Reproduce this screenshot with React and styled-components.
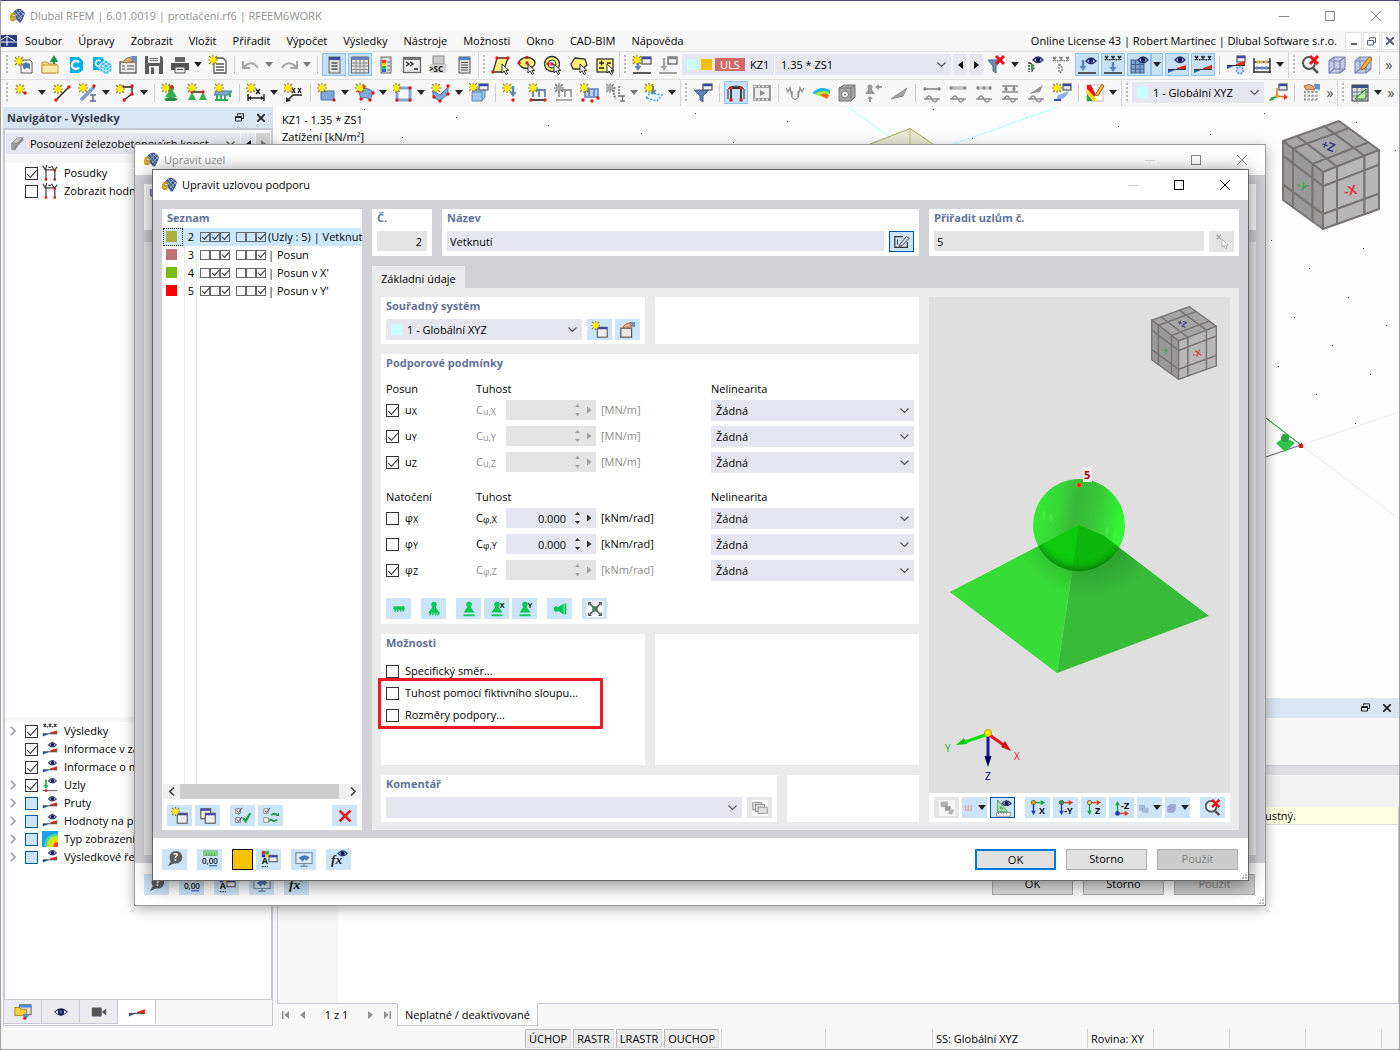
import React from "react";
import styled, { createGlobalStyle, css } from "styled-components";

const c = {
  field: "#e6e6f1",
  off: "#e4e4e4",
  tool: "#cce4f7",
  panel: "#ebebeb",
  body: "#d1d1d6",
  chrome: "#f7f7f7",
  head: "#d8e5f2",
  title: "#5f7296",
  line: "#c8c8d4",
};

const Global = createGlobalStyle`
  * { box-sizing: border-box; }
  body { margin: 0; overflow: hidden; font: 11px/18px "Open Sans", "Noto Sans", sans-serif; color: #000; }
  button, input, select { font: inherit; color: inherit; border: 0; padding: 0; margin: 0; background: none; border-radius: 0; outline: 0; }
  svg { display: block; flex: none; }
`;

/* ---------- icon primitives ---------- */
const Star = ({ x = 5, y = 5, k = "#ffee00", s = "#9a7b00" }) => (
  <g>
    <path d={`M${x - 5} ${y}H${x + 5}M${x} ${y - 5}V${y + 5}M${x - 4} ${y - 4}L${x + 4} ${y + 4}M${x + 4} ${y - 4}L${x - 4} ${y + 4}`} stroke={s} strokeWidth="1.2" />
    <circle cx={x} cy={y} r="2.8" fill={k} stroke={k} />
  </g>
);
const GStar = (p) => <Star {...p} k="#aaa" s="#777" />;
const Eye = ({ x = 13, y = 5 }) => (
  <g>
    <path d={`M${x - 5} ${y}Q${x} ${y - 6} ${x + 5} ${y}Q${x} ${y + 5} ${x - 5} ${y}Z`} fill="#c3c9ea" stroke="#2a3266" strokeWidth="1.3" />
    <circle cx={x} cy={y - 0.3} r="2.3" fill="#111a55" />
  </g>
);
const Win = ({ x = 9, y = 2, w = 9, h = 7, k = "#3b46a8" }) => (
  <g>
    <rect x={x} y={y} width={w} height={h} fill="#eee" stroke="#555" strokeWidth="1.2" />
    <rect x={x} y={y} width={w} height="2.2" fill={k} />
  </g>
);
const Dots = ({ p, k = "#e8141c" }) => p.map(([x, y], i) => <circle key={i} cx={x} cy={y} r="1.7" fill={k} />);
const XXX = ({ y = 2, k = "#222" }) => (
  <path d={`M2 ${y}l3 4m0-4l-3 4M8.500 ${y}l3 4m0-4l-3 4M15 ${y}l3 4m0-4l-3 4M6.700 ${y + 3}v1.500M13.200 ${y + 3}v1.500`} stroke={k} strokeWidth="1.500" fill="none" />
);
const Wedge = ({ y = 12 }) => (
  <g>
    <path d={`M1 ${y + 1.500}H10V${y + 1}L1 ${y + 5}Z`} fill="#2f52b5" />
    <path d={`M10 ${y + 1.500}H19V${y - 3}L10 ${y}Z`} fill="#d9301c" />
    <path d={`M1 ${y + 1.500}H19`} stroke="#333" />
  </g>
);
const Down = ({ x = 6, y = 3, h = 10, k = "#5b84bd" }) => (
  <g>
    <path d={`M${x} ${y}V${y + h - 3}`} stroke={k} strokeWidth="2.400" />
    <path d={`M${x - 3.500} ${y + h - 4}H${x + 3.500}L${x} ${y + h + 1}Z`} fill={k} />
  </g>
);
const Wave = () => <path d="M2 16H18M4 16q3-6 6 0t6 0" stroke="#8c8c8c" strokeWidth="1.500" fill="none" />;
const Cursor = ({ x = 11, y = 9, k = "#fff" }) => (
  <path d={`M${x} ${y}v9l2.200-2 1.800 3.500 1.600-.8-1.700-3.300h3Z`} fill={k} stroke="#333" strokeWidth="1" />
);
const RedX = ({ x = 10, y = 2, s = 8 }) => <path d={`M${x} ${y}l${s} ${s}m0-${s}l-${s} ${s}`} stroke="#f0101a" strokeWidth="3" />;
const Support = ({ k = "#2fb14d" }) => (
  <g fill={k}>
    <circle cx="10" cy="5" r="3" />
    <path d="M8.500 6H11.500L12.500 9L16 14H4L7.500 9Z" />
  </g>
);
const Hatch = ({ y = 15, k = "#00c853" }) => (
  <path d={`M4 ${y}H16M5 ${y + 3}l2-3M8 ${y + 3}l2-3M11 ${y + 3}l2-3M14 ${y + 3}l2-3`} stroke={k} strokeWidth="1.400" fill="none" />
);
const Letter = ({ x, y, children, k = "#111", s = 8 }) => (
  <text x={x} y={y} fontSize={s} fontWeight="700" fill={k}>{children}</text>
);
const Box3 = ({ k = "#8fb2df", e = "#5d6f9c" }) => (
  <g fill={k} stroke={e} strokeWidth="1.100" strokeLinejoin="round">
    <path d="M2 6L7 2H18V14L13 18H2Z" />
    <path d="M2 6H13V18M13 6L18 2M7 2V14H18M7 14L2 18" fill="none" />
  </g>
);
const Sheet = ({ k = "#5d7fc0" }) => (
  <g>
    <rect x="5" y="2" width="11" height="16" fill="#ddd" stroke="#555" />
    <rect x="5" y="2" width="11" height="3" fill={k} />
    <path d="M7 7.500H14M7 10H14M7 12.500H14M7 15H14" stroke="#555" />
  </g>
);
const Axes = ({ a, b, o, t }) => (
  <g strokeWidth="1.600" fill="none">
    <path d="M5 4H13" stroke={a} />
    <path d="M13 1L18 4L13 7Z" fill={a} stroke="none" />
    <path d="M5 4V14" stroke={b} />
    <path d="M2.500 13H7.500L5 18Z" fill={b} stroke="none" />
    <circle cx="5" cy="4" r="2.400" fill={o} stroke="#555" strokeWidth="1" />
    <text x={t.length > 1 ? 8 : 11} y="17" fontSize="10" fontWeight="700" fill="#111">{t}</text>
  </g>
);
const Gear = ({ x, y }) => <circle cx={x} cy={y} r="3.500" fill="#cfe0fa" stroke="#6f95d8" strokeWidth="2" strokeDasharray="2 1" />;

const icons = {
  newdoc: <><path d="M7 5H16L18 7V18H7Z" fill="#fff" stroke="#555" /><path d="M8 9q4-3 8 0v6q-3-4-6 0Z" fill="#4d78b0" /><Star x={5} y={6} /></>,
  open: <><path d="M2 7H7L9 9H16V18H2Z" fill="#f4d980" stroke="#b8973a" /><path d="M2 18V10H18V18Z" fill="#fbe9a6" stroke="#b8973a" /><path d="M14 9V4M11.500 6L14 2L16.500 6Z" stroke="#1b9148" strokeWidth="2" fill="#1b9148" /></>,
  cloudC: <><path d="M4 2H13L17 6V15L13 18H4Z" fill="#00b1e6" /><path d="M13 7.500A4 4 0 1 0 13 12.500" stroke="#fff" strokeWidth="2.300" fill="none" /></>,
  cubes: <><path d="M1 2H10L12 5V15H1Z" fill="#00b1e6" /><path d="M8.500 6A3 3 0 1 0 8 11" stroke="#fff" strokeWidth="1.600" fill="none" /><path d="M8 9L14 5L20 9V16L14 20L8 16Z" fill="#35b9e8" stroke="#fff" /><path d="M8 9L14 13L20 9M14 13V20M11 7L17 11V18M17 7L11 11V18M8 12.500L14 16.500L20 12.500" stroke="#fff" fill="none" strokeWidth=".8" /></>,
  hand: <><rect x="2" y="7" width="16" height="11" fill="#e8e8e8" stroke="#555" strokeWidth="1.300" /><path d="M4 11H7M9 11H16M4 14H7M9 14H16" stroke="#555" /><path d="M5 7q3-5 8-5l2 5q-4-1-6 1Z" fill="#e2ab7c" stroke="#a36a3c" /><path d="M13 1L19 1V8L15 7Z" fill="#6c8fc2" /></>,
  save: <><path d="M1 1H17L19 3V19H1Z" fill="#5b5b5b" /><rect x="4" y="1" width="12" height="7" fill="#eee" /><path d="M5.500 3.500H14M5.500 5.500H14" stroke="#777" /><rect x="5" y="11" width="10" height="8" fill="#eee" /><rect x="7" y="12.500" width="3" height="6.500" fill="#5b5b5b" /></>,
  print: <><rect x="5" y="2" width="10" height="5" fill="#666" /><path d="M1 8H19V15H1Z" fill="#555" /><rect x="5" y="12" width="10" height="6" fill="#eee" stroke="#555" /><path d="M7 14.500H13" stroke="#555" /></>,
  report: <><path d="M6 3H15L18 6V18H6Z" fill="#fff" stroke="#555" strokeWidth="1.300" /><path d="M8 9H16M8 12H16M8 15H16" stroke="#555" strokeWidth="1.300" /><Star x={5} y={5} /></>,
  undo: <path d="M2 6V13H9M3 12Q11 4 17 13" stroke="#a5a5a5" strokeWidth="2" fill="none" />,
  redo: <path d="M18 6V13H11M17 12Q9 4 3 13" stroke="#a5a5a5" strokeWidth="2" fill="none" />,
  nav: <><rect x="5" y="2" width="11" height="16" fill="#ddd" stroke="#666" /><rect x="5" y="2" width="11" height="3" fill="#3e4f95" /><path d="M7.500 8H13.500M7.500 11H13.500M7.500 14H13.500" stroke="#555" strokeWidth="1.500" /></>,
  table: <><rect x="1.500" y="2" width="17" height="16" fill="#e4e4e4" stroke="#666" /><rect x="1.500" y="2" width="17" height="3" fill="#6a83b5" /><path d="M2 8H18M2 11H18M2 14.500H18M6 5V18M10 5V18M14 5V18" stroke="#8a8a8a" /></>,
  colors: <><rect x="5" y="2" width="10" height="16" fill="#ddd" stroke="#666" /><rect x="6" y="5" width="4" height="3" fill="#e33" /><rect x="6" y="8" width="4" height="3" fill="#fd0" /><rect x="6" y="11" width="4" height="3" fill="#2b5" /><rect x="6" y="14" width="4" height="3" fill="#36c" /><path d="M11.500 7H14M11.500 11H14M11.500 15H14" stroke="#555" /></>,
  console: <><rect x="1.500" y="2.500" width="17" height="15" fill="#eee" stroke="#666" strokeWidth="1.300" /><rect x="1.500" y="2.500" width="17" height="2.500" fill="#777" /><path d="M4 7l3 2-3 2M8 7l3 2-3 2M12 14H16" stroke="#222" fill="none" strokeWidth="1.300" /></>,
  script: <><rect x="5" y="1" width="11" height="8" fill="#ccc" stroke="#888" /><path d="M2 9H18V18H2Z" fill="#bbb" opacity=".6" /><Letter x={1} y={17}>&gt;SC</Letter></>,
  sheet: <Sheet />,
  selA: <><path d="M6 3H17L12 17H2Z" fill="#fbf37c" stroke="#333" strokeWidth="1.300" /><Dots p={[[6, 3], [17, 3], [2, 17]]} /><Cursor /></>,
  selB: <><ellipse cx="10" cy="8" rx="8" ry="5.500" fill="#fbf37c" stroke="#333" strokeWidth="1.300" /><Dots p={[[10, 2.500], [2, 8], [10, 8]]} /><Cursor /></>,
  selC: <><circle cx="9" cy="9" r="7.500" fill="#fbf37c" stroke="#333" strokeWidth="1.300" /><circle cx="9" cy="9" r="4" fill="#fff" stroke="#333" /><Dots p={[[9, 9], [5, 9]]} /><Cursor /></>,
  selD: <><path d="M6 3L16 4L18 10L13 14H4L2 9Z" fill="#fbf37c" stroke="#333" strokeWidth="1.300" /><Cursor /></>,
  selE: <><rect x="2" y="4" width="16" height="13" fill="#fbf37c" stroke="#333" strokeWidth="1.300" /><path d="M4 8H9M6.500 5.500V10.500M4 13H9M12 8H16" stroke="#222" strokeWidth="1.300" /><Cursor x={12} /></>,
  lcNew: <><Win x={10} y={2} /><Down x={6} y={5} h={10} /><Star x={5} y={5} /><path d="M1 18H19" stroke="#333" strokeWidth="1.600" /></>,
  lcGrey: <><Win x={10} y={2} k="#888" /><Down x={6} y={3} h={12} k="#a5a5a5" /><path d="M1 18H19" stroke="#8a8a8a" strokeWidth="1.600" /></>,
  filterX: <><path d="M1 5H14L9 11V18L6 16V11Z" fill="#6c8db5" stroke="#48658c" /><RedX x={9} y={1} s={8} /></>,
  eyeCurve: <><Eye x={13} y={5} /><path d="M4 7V17M5 8q7 4 1 9" stroke="#444" fill="none" strokeWidth="1.500" strokeDasharray="2 1" /><path d="M7 9v6" stroke="#2a4" strokeWidth="2" /></>,
  xxxCurve: <><XXX k="#777" /><path d="M8 9V18M8 9q6 4 1 9" stroke="#777" fill="none" strokeWidth="1.400" strokeDasharray="2 1" /></>,
  eyeLoad: <><Eye x={14} y={6} /><Down x={6} y={5} h={10} /><path d="M1 18H19" stroke="#333" strokeWidth="1.600" /></>,
  xxxLoad: <><XXX y={1} /><Down x={10} y={7} h={9} /><path d="M1 18H19" stroke="#333" strokeWidth="1.600" /></>,
  eyeGrid: <><rect x="2" y="5" width="13" height="13" fill="#7ba1d1" stroke="#44608c" /><path d="M2 9.500H15M2 14H15M6.500 5V18M11 5V18" stroke="#44608c" /><Eye x={14} y={5} /></>,
  eyeRes: <><Eye x={13} y={5} /><Wedge y={13} /></>,
  xxxRes: <><XXX y={1} /><Wedge y={13} /></>,
  calcSet: <><Win x={11} y={1} w={8} h={6} /><Wedge y={9} /><Gear x={14} y={15} /></>,
  abacus: <><path d="M2 3V18M18 3V18M2 7H18M2 13H18M1 17H19" stroke="#333" strokeWidth="1.500" /><Dots k="#d4b857" p={[[6, 7], [9.500, 7], [14, 7]]} /><Dots k="#6c86c8" p={[[5, 13], [10, 13], [14, 13]]} /></>,
  zoomX: <><circle cx="8" cy="8" r="6" fill="#f3f3f3" stroke="#555" strokeWidth="2" /><path d="M12 13L17 18" stroke="#555" strokeWidth="2.600" /><RedX x={9} y={1} s={8} /></>,
  cube: <Box3 k="#c3cbe8" e="#7d86ab" />,
  cubeEdit: <><Box3 k="#c3cbe8" e="#7d86ab" /><path d="M9 11L16 2L19 4L12 13L8 15Z" fill="#f3b33c" stroke="#a8681a" /></>,
  node: <><Star x={6} y={6} /><Dots p={[[11, 10]]} /></>,
  line: <><path d="M4 17L17 4" stroke="#222" strokeWidth="1.400" /><Dots p={[[4, 17], [17, 4]]} /><Star x={6} y={6} /></>,
  member: <><path d="M3 17L16 4" stroke="#7e9fd0" strokeWidth="3.500" /><Dots p={[[16, 3]]} /><Star x={5} y={5} /><path d="M12 12H18M12 18H18M15 12V18" stroke="#556c9b" strokeWidth="1.500" /></>,
  poly: <><path d="M4 4H16V11L8 17" stroke="#222" strokeWidth="1.400" fill="none" /><Dots p={[[6, 4], [16, 3], [16, 11], [8, 17]]} /><Star x={4} y={6} /></>,
  sup1: <><Support /><path d="M3 16Q10 12 17 16L14 18H5Z" fill="#1c8f3b" /><Star x={5} y={5} /><Dots p={[[11, 4]]} /></>,
  sup2: <><path d="M4 9H17" stroke="#222" strokeWidth="1.500" /><path d="M5 9L9 17H1ZM16 9L20 17H12Z" fill="#2fb14d" /><Dots p={[[5, 9], [16, 9]]} /><Star x={5} y={5} /></>,
  sup3: <><path d="M3 8H19L16 12H1Z" fill="#7fa8d8" stroke="#4e77aa" /><path d="M4 12V17M8 12V17M12 12V17M2 17H15M17 9V14" stroke="#2fb14d" strokeWidth="2" /><Star x={6} y={5} /></>,
  dim: <><path d="M2 11V18M18 11V18M2 15H18" stroke="#222" strokeWidth="1.400" /><path d="M2 15l3-2v4ZM18 15l-3-2v4Z" /><path d="M10 6l4 5m0-5l-4 5" stroke="#222" strokeWidth="1.500" /><Star x={5} y={5} /></>,
  dim2: <><path d="M3 18L9 12H18" stroke="#222" strokeWidth="1.500" fill="none" /><path d="M2 19V14L7 18Z" /><path d="M8 5l3 5m0-5l-3 5M14 5l3 5m0-5l-3 5" stroke="#222" strokeWidth="1.400" /><Star x={4} y={5} /></>,
  surf: <><rect x="4" y="8" width="13" height="9" fill="#7fa8d8" stroke="#4e77aa" /><Dots p={[[17, 17]]} /><Star x={5} y={5} /></>,
  surfC: <><path d="M4 8Q11 2 18 9L15 17Q9 12 6 17Z" fill="#7fa8d8" stroke="#4e77aa" /><Dots p={[[4, 8], [18, 10], [15, 17], [6, 16], [9, 4]]} /><Star x={5} y={5} /></>,
  opening: <><rect x="4" y="5" width="13" height="12" fill="#fff" stroke="#7fa8d8" strokeWidth="3" /><Dots p={[[4, 5], [17, 5], [4, 17], [17, 17]]} /><Star x={3} y={5} /></>,
  fold: <><path d="M2 8L9 12L17 4V11L9 18L2 14Z" fill="#7fa8d8" stroke="#4e77aa" /><Dots p={[[17, 3], [9, 18], [3, 14], [17, 11]]} /><Star x={5} y={5} /></>,
  solid: <><path d="M3 9L7 6H16V14L13 18H3Z" fill="#9fc4ee" stroke="#5b86bd" /><path d="M3 9H13V18" stroke="#5b86bd" fill="none" /><Win x={10} y={1} w={9} h={6} /><Star x={4} y={4} /></>,
  nload: <><Star x={5} y={5} /><Down x={11} y={3} h={10} /><Dots p={[[11, 17]]} /></>,
  mload: <><path d="M5 7H17V14M11 7V14M5 7V14" stroke="#5b84bd" strokeWidth="1.800" fill="none" /><path d="M2 17H18" stroke="#222" strokeWidth="1.600" /><Dots p={[[3, 17], [17, 17]]} /><Star x={5} y={5} /></>,
  mloadG: <><path d="M5 7H17V14M11 7V14M5 7V14" stroke="#999" strokeWidth="1.800" fill="none" /><path d="M2 17H18" stroke="#999" strokeWidth="1.600" /><GStar /></>,
  sload: <><path d="M5 6H18V14H5Z" fill="#bcd2ee" stroke="#5b84bd" strokeWidth="1.600" /><path d="M9 6V13M14 6V13" stroke="#5b84bd" strokeWidth="1.800" /><Dots p={[[3, 17], [12, 18], [18, 15]]} /><Star x={4} y={5} /></>,
  imp: <><GStar x={4} y={5} /><path d="M9 4Q6 10 10 16M13 3V15" stroke="#888" strokeWidth="2" fill="none" strokeDasharray="2 1" /><path d="M14 13H19M14 18H19M16.500 13V18" stroke="#777" strokeWidth="1.500" /></>,
  free: <><path d="M2 15L6 10L18 12L13 18Z" fill="none" stroke="#2a9be0" strokeWidth="1.400" strokeDasharray="2 1.500" /><Down x={9} y={3} h={8} /><Star x={5} y={5} /></>,
  filter: <><path d="M1 7H16L10 13V19L7 17V13Z" fill="#5e82b3" stroke="#48658c" /><Win x={10} y={1} w={9} h={6} /></>,
  frame: <><path d="M5 17V5H15V17" stroke="#333" strokeWidth="1.800" fill="none" /><path d="M2 16V6Q4 3 10 3T18 6V16" stroke="#333" fill="none" /><Dots p={[[5, 17], [15, 17], [5, 5], [15, 5]]} /></>,
  film: <><rect x="1" y="2" width="18" height="16" fill="#999" /><rect x="3" y="5" width="14" height="10" fill="#eee" /><path d="M8 7L13 10L8 13Z" fill="#888" /><path d="M2 3.500H18M2 16.500H18" stroke="#eee" strokeWidth="1.500" strokeDasharray="2 2" /></>,
  moment: <path d="M1 5L3 9L5 5L7 14Q10 19 13 14L15 5L17 9L19 5M7 8V14M13 8V14" stroke="#909090" strokeWidth="1.300" fill="none" />,
  rainbow: <><path d="M1 10Q9 2 19 7V11Q10 8 9 13Z" fill="#1fb5e8" /><path d="M4 11Q11 6 18 9L17 13Q12 11 11 14Z" fill="#b8e62a" /><path d="M9 12Q13 9 18 12L16 16Z" fill="#f4611e" /></>,
  boxG: <><path d="M2 5L7 2H18V14L14 18H2Z" fill="#a5a5a5" stroke="#777" /><path d="M2 5H14V18M14 5L18 2" stroke="#777" fill="none" /><circle cx="8" cy="11.500" r="3.500" fill="#eee" stroke="#777" /><circle cx="8" cy="11.500" r="1" fill="#777" /></>,
  supG: <><circle cx="7" cy="4" r="2.500" fill="#999" /><path d="M6 5H8L12 11H2ZM12 4L16 1V3H19V5H16V7Z" fill="#999" /><path d="M7 13L10 16H8V19H6V16H4Z" fill="#999" /></>,
  wing: <path d="M2 16L18 5L14 13Z" fill="#a5a5a5" stroke="#8a8a8a" />,
  w1: <><path d="M2 6H18" stroke="#888" strokeWidth="1.600" /><Dots k="#888" p={[[3, 6], [17, 6]]} /><Wave /></>,
  w2: <><path d="M3 5H17" stroke="#bbb" strokeWidth="3.500" /><Dots k="#888" p={[[3, 5], [17, 5]]} /><Wave /></>,
  w3: <><path d="M3 5H17" stroke="#ccc" strokeWidth="3" /><Dots k="#888" p={[[4, 5], [10, 5], [16, 5]]} /><Wave /></>,
  w4: <><path d="M2 3H18M2 9H18M6 3V8M14 3V8" stroke="#888" strokeWidth="1.600" /><Dots k="#888" p={[[6, 6], [14, 6]]} /><Wave /></>,
  w5: <><path d="M3 11L17 2L14 9Z" fill="#999" /><Wave /></>,
  resNew: <><path d="M4 18Q14 16 17 8L6 12Z" fill="#8eaef0" /><path d="M2 17H9" stroke="#3455c0" strokeWidth="2" /><Win x={11} y={1} w={8} h={6} /><Star x={5} y={5} /></>,
  palette: <><rect x="2" y="2" width="16" height="16" fill="#fff" stroke="#bbb" /><path d="M2 2H6L11 12L9 14L2 6Z" fill="#e8141c" /><path d="M2 6L13 18H9L2 11Z" fill="#ffe100" /><path d="M2 11L8 18H2Z" fill="#25a03c" /><path d="M10 12L17 1L19 3L13 13Z" fill="#f3b33c" stroke="#a8681a" /></>,
  csys: <><Win x={11} y={1} w={8} h={6} /><path d="M9 13V5M9 13L17 14" stroke="#e07b2c" strokeWidth="1.600" /><path d="M16 11L20 14L16 17Z" fill="#d33" /><path d="M1 18L4 13.500L6 17Z" fill="#1f9f3f" /><path d="M9 13L3 16.500" stroke="#1f9f3f" strokeWidth="1.500" /><Dots p={[[9, 13]]} k="#e5a000" /></>,
  gridHand: <><path d="M3 9H17M3 13H17M3 17H17M4 8V18M8 8V18M12 8V18M16 8V18" stroke="#777" strokeDasharray="2 1.500" /><path d="M3 3q5-3 9 0l2 4q-6-1-9 0Z" fill="#e2ab7c" stroke="#a36a3c" /><path d="M13 1H19V7L14 6Z" fill="#6c8fc2" /></>,
  units: <><rect x="2" y="2" width="16" height="16" fill="#d5dad5" stroke="#335" /><path d="M2 9H18M2 13H18M7 5V18M12 5V18" stroke="#667" strokeWidth=".8" /><rect x="2" y="2" width="16" height="3" fill="#3b4f78" /><path d="M5 16L16 6V16Z" fill="#b7f0a8" stroke="#2a7a35" /></>,
  winNew: <><Win x={7} y={7} w={11} h={11} /><Star x={5} y={5} /></>,
  winHand: <><rect x="2" y="8" width="12" height="10" fill="#e8e8e8" stroke="#555" strokeWidth="1.300" /><path d="M4 7q3-5 8-5l2 5q-4-1-6 1Z" fill="#e2ab7c" stroke="#a36a3c" /><path d="M12 1L18 1V7L14 6Z" fill="#6c8fc2" /></>,
  winCopy: <><Win x={2} y={2} w={11} h={11} /><Win x={7} y={7} w={11} h={11} /></>,
  checkAll: <><path d="M2 2H7V7H2ZM2 12H7V17H2Z" fill="#fff" stroke="#666" /><path d="M3 4l2 2 4-5M3 14l2 2 4-5" stroke="#333" fill="none" /><path d="M10 12L13 16L18 7" stroke="#1fa045" strokeWidth="2.500" fill="none" /></>,
  checkSwap: <><path d="M2 2H7V7H2ZM2 12H7V17H2Z" fill="#fff" stroke="#888" /><path d="M3 4l2 2 4-5" stroke="#333" fill="none" /><path d="M10 9q4-3 7 0M17 14q-4 3-7 0" stroke="#1fa045" strokeWidth="2" fill="none" /><path d="M15 10H19V6ZM12 13H8V17Z" fill="#1fa045" /></>,
  del: <RedX x={4} y={4} s={12} />,
  help: <><circle cx="11" cy="8" r="7" fill="#5b5b5b" /><path d="M6 11L2 18L11 14Z" fill="#5b5b5b" /><text x="8" y="12" fontSize="11" fontWeight="700" fill="#fff">?</text></>,
  decimals: <><rect x="3" y="1" width="15" height="5" fill="#8fdc8f" stroke="#5da35d" strokeWidth=".8" /><path d="M6 3V6M9 3V6M12 3V6M15 3V6" stroke="#4c8a4c" /><text x="1" y="15" fontSize="9" fontWeight="600" fill="#111">0,00</text><path d="M9 17.500H18" stroke="#2f52b5" strokeWidth="1.200" /></>,
  fonts: <><rect x="2" y="1" width="4" height="4" fill="#e22" /><rect x="6" y="1" width="4" height="4" fill="#2b3" /><rect x="2" y="5" width="4" height="3" fill="#23c" /><rect x="6" y="5" width="4" height="3" fill="#fc0" /><Letter x={2} y={16} s={10}>A</Letter><path d="M2 18.500H9" stroke="#111" strokeDasharray="2 1" /><Win x={10} y={6} w={9} h={7} /></>,
  monitor: <><rect x="1" y="3" width="18" height="12" fill="#dcebf8" stroke="#7c8ea5" strokeWidth="1.300" /><path d="M4 9Q10 3 16 8L13 12Q10 8 9 13Z" fill="#4d78b0" /><path d="M10 15V18M6 18H14" stroke="#7c8ea5" strokeWidth="1.500" /></>,
  fx: <><text x="1" y="15" fontSize="15" fontStyle="italic" fontFamily="Liberation Serif, serif" fontWeight="700" fill="#222">fx</text><Eye x={14} y={4} /></>,
  edit: <><path d="M11 4H2V16H16V10" fill="none" stroke="#333" strokeWidth="1.300" /><path d="M5 7V13" stroke="#333" /><path d="M8 12L15 4L18 6L10 14L7 15Z" fill="#cfe3f7" stroke="#333" /></>,
  pick: <><path d="M4 2l5 5m0-5l-5 5" stroke="#aaa" strokeWidth="1.600" /><path d="M10 7v9l2.200-2 1.800 3.500 1.600-.8-1.700-3.300h3Z" fill="#fff" stroke="#aaa" /></>,
  g1: <><path d="M4 7H16V10H4Z" fill="#00c853" /><Hatch y={10} /></>,
  g2: <><Support k="#00c853" /><Hatch y={14} /></>,
  g3: <><Support k="#00c853" /><path d="M4 16H16V18H4Z" fill="#00c853" /></>,
  g4: <><Support k="#00c853" /><path d="M4 16H16V18H4Z" fill="#00c853" /><Letter x={13} y={9}>X</Letter></>,
  g5: <><Support k="#00c853" /><path d="M4 16H16V18H4Z" fill="#00c853" /><Letter x={13} y={9}>Y</Letter></>,
  g6: <g fill="#00c853"><circle cx="6" cy="10" r="3" /><path d="M7 8.500V11.500L14 16V4Z" /><path d="M15 4H17V16H15Z" /></g>,
  g7: <><rect x="1" y="1" width="18" height="18" fill="#fff" /><path d="M4 4L16 16M16 4L4 16" stroke="#444" strokeWidth="1.500" /><rect x="7" y="7" width="6" height="6" fill="#4a7a5a" /><path d="M3 6V3H6M14 3H17V6M17 14V17H14M6 17H3V14" stroke="#444" strokeWidth="1.300" fill="none" /></>,
  stack: <><rect x="1" y="1" width="18" height="18" fill="#fff" /><g fill="#e0e0e0" stroke="#8c8c8c"><rect x="2" y="4" width="10" height="8" /><rect x="5" y="6" width="10" height="8" /><rect x="8" y="9" width="10" height="7" /></g></>,
  view0: <g fill="#b0b0b0"><rect x="1" y="1" width="18" height="18" fill="#f6f6f6" /><rect x="3" y="3" width="8" height="6" /><path d="M8 8H14V13H8Z" fill="#999" /><path d="M12 12L18 12L16 17H12Z" fill="#b0b0b0" /></g>,
  load: <path d="M2 6V12M6 6V12M10 6V12M1 13H11" stroke="#e08a9a" strokeWidth="1.400" />,
  ruler: <><path d="M4 1V14H15Z" fill="#a8e8a8" stroke="#4f9a5f" /><path d="M7 8V11H10Z" fill="#cce4f7" stroke="#4f9a5f" /><rect x="3" y="15" width="15" height="4" fill="#fff" stroke="#777" strokeWidth=".8" /><path d="M5 15V17M8 15V17M11 15V17M14 15V17" stroke="#777" /><Eye x={14} y={5} /></>,
  ax1: <Axes a="#1fa045" b="#1f3fb0" o="#f5b400" t="X" />,
  ax2: <Axes a="#d9401c" b="#1f3fb0" o="#1fa045" t="-Y" />,
  ax3: <Axes a="#d9401c" b="#1fa045" o="#e8d45a" t="Z" />,
  ax4: <g strokeWidth="1.600"><path d="M5 16H13" stroke="#d9401c" /><path d="M13 13L18 16L13 19Z" fill="#d9401c" /><path d="M5 16V6" stroke="#1fa045" /><path d="M2.500 7H7.500L5 2Z" fill="#1fa045" /><circle cx="5" cy="16" r="2.600" fill="#1f3fb0" /><Letter x={9} y={11} s={10}>-Z</Letter></g>,
  blk: <g fill="#a9bddc" stroke="#8a9fc4" strokeWidth=".6"><rect x="1" y="6" width="7" height="7" /><rect x="5" y="10" width="8" height="6" /></g>,
  blk2: <g fill="#a9b3dc" stroke="#7f8bbd" strokeWidth=".8"><path d="M1 8L4 5H12V13L9 16H1Z" /><path d="M1 8H9V16M5 8V16M1 12H9" fill="none" /></g>,
  check: <><path d="M5 6V19M16 6V19M5 6H16" stroke="#444" strokeWidth="1.600" fill="none" /><path d="M1 1l3 5M6 0L4 7M8 3h3M12 1l3 5M19 2l-3 4" stroke="#333" strokeWidth="1.400" fill="none" /><Dots p={[[16, 7], [16, 18], [5, 18]]} k="#c22" /></>,
  resX: <><XXX y={1} /><Wedge y={12} /></>,
  resE: <><Eye x={13} y={5} /><Wedge y={12} /></>,
  nodeE: <><Eye x={13} y={5} /><Down x={5} y={3} h={11} k="#35b55a" /><path d="M1 17H19" stroke="#777" strokeWidth="1.500" /><Dots p={[[5, 17]]} /></>,
  iso: <><rect width="20" height="20" fill="#1ea0e6" /><path d="M3 20Q3 3 20 3V20Z" fill="#3fd8b0" /><path d="M6 20Q6 6 20 6V20Z" fill="#b5ea1e" /><path d="M10 20Q10 10 20 10V20Z" fill="#ffd800" /><path d="M14 20Q14 14 20 14V20Z" fill="#f0441c" /></>,
  tabData: <><rect x="6" y="2" width="13" height="11" fill="#ddd" stroke="#555" /><rect x="6" y="2" width="13" height="3" fill="#4d8ae0" /><path d="M1 5H6L8 7H14V14H1Z" fill="#ffd23a" stroke="#a8801a" /><path d="M9 14Q13 9 17 14L13 18Z" fill="#6c8fc2" /><Dots p={[[12, 17]]} /></>,
  tabEye: <><path d="M1 10Q10 1 19 10Q10 19 1 10Z" fill="#fff" stroke="#1c2560" strokeWidth="1.500" /><circle cx="10" cy="10" r="4.500" fill="#1c2560" /><circle cx="10" cy="10" r="1.500" fill="#6c8fc2" /></>,
  camera: <><rect x="2" y="5" width="11" height="10" rx="1" fill="#555" /><path d="M13 10L18 6V14Z" fill="#555" /></>,
  tabRes: <Wedge y={10} />,
  beam: <><path d="M1 9L9 1H17L9 9Z" fill="#c6c6c6" stroke="#888" /><path d="M1 9H9V13H6V18H1Z" fill="#a2a2a2" stroke="#888" /><path d="M9 9L17 1V5L9 13ZM6 13H9L6 18Z" fill="#8c8c8c" stroke="#888" /></>,
};

const Icon = ({ n, size = 20 }) => (
  <svg width={size} height={size} viewBox="0 0 20 20" fill="none" aria-hidden="true">
    <g fill="#222" fontFamily="Open Sans, sans-serif">{icons[n]}</g>
  </svg>
);

const Logo = () => (
  <svg width="16" height="16" viewBox="0 0 16 16" aria-hidden="true">
    <path d="M4 5Q7 0 12 1L16 5Q14 12 11 15L7 11Q7 8 4 5Z" fill="#3d5a88" />
    <path d="M5 4L12 12M7 2L13 10M10 2L15 7M6 8L13 2M9 11L15 5" stroke="#a9c1e2" strokeWidth=".8" />
    <text x="1" y="13" fontSize="10" fontWeight="800" fontFamily="Open Sans, sans-serif" fill="#e3b417" stroke="#7a5c00" strokeWidth=".4">6</text>
  </svg>
);

/* ---------- window chrome ---------- */
const Shell = styled.div`
  height: 100vh;
  display: flex;
  flex-direction: column;
  background: ${c.chrome};
  border: 1px solid #a0a0a0;
  border-top-color: #4a4c78;
  overflow: hidden;
`;
const TitleBar = styled.header`
  display: flex;
  align-items: center;
  height: 30px;
  padding-left: 8px;
  gap: 5px;
  background: #fff;
  color: ${(p) => (p.$active ? "#000" : "#8f8f8f")};
  flex: none;
`;
const WinButtons = styled.div`
  display: flex;
  margin-left: auto;
  button { width: 46px; height: 30px; display: grid; place-items: center; }
`;
const WindowButtons = ({ stroke = "#000", min = "#ccc" }) => (
  <WinButtons>
    <button aria-label="Minimalizovat"><svg width="11" height="11"><path d="M0 5.500H10" stroke={min} /></svg></button>
    <button aria-label="Maximalizovat"><svg width="11" height="11"><rect x=".5" y=".5" width="9" height="9" fill="none" stroke={stroke} /></svg></button>
    <button aria-label="Zavřít"><svg width="11" height="11"><path d="M0 0L10 10M10 0L0 10" stroke={stroke} /></svg></button>
  </WinButtons>
);
const MenuBar = styled.nav`
  display: flex;
  align-items: center;
  height: 20px;
  flex: none;
`;
const MenuItem = styled.button`
  padding: 0 8px;
  white-space: nowrap;
`;
const License = styled.span`
  margin-left: auto;
  margin-right: 8px;
  white-space: nowrap;
`;
const MdiButton = styled.button`
  width: 17px;
  height: 18px;
  display: grid;
  place-items: center;
  border: 1px solid #e2e2e2;
  background: #fff;
  margin-right: 1px;
`;
const ToolRow = styled.div`
  display: flex;
  align-items: center;
  gap: 2px;
  height: 28px;
  padding-bottom: 2px;
  border-top: 1px solid #dedede;
  flex: none;
  overflow: hidden;
`;
const Group = styled.div`
  display: flex;
  flex: none;
`;
const ToolButton = styled.button`
  width: 24px;
  height: 23px;
  display: grid;
  place-items: center;
  ${(p) => p.$on && css`background: #c5e0f7; box-shadow: inset 0 0 0 1px #8fc3ee;`}
`;
const CaretButton = styled(ToolButton)`
  width: 12px;
`;
const Sep = styled.i`
  width: 5px;
  height: 18px;
  flex: none;
  background: linear-gradient(#cfcfcf, #cfcfcf) 2px 0 / 1px 100% no-repeat;
`;
const Grip = styled.i`
  width: 9px;
  height: 27px;
  flex: none;
  border-left: 1px solid ${(p) => (p.$first ? "transparent" : "#d4d4d4")};
  background: repeating-linear-gradient(#b8b8b8 0 2px, transparent 2px 4px) 4px 4px / 2px 18px no-repeat;
`;
const More = styled.button`
  width: 10px;
  font-size: 14px;
  color: #444;
  flex: none;
`;
const Caret = ({ k = "#222" }) => (
  <svg width="8" height="5" aria-hidden="true"><path d="M0 0H8L4 5Z" fill={k} /></svg>
);
const Arrow = ({ left, k = "#111" }) => (
  <svg width="5" height="8" aria-hidden="true"><path d={left ? "M5 0V8L0 4Z" : "M0 0V8L5 4Z"} fill={k} /></svg>
);

const SelectWrap = styled.div`
  position: relative;
  display: flex;
  align-items: center;
  height: 21px;
  background: ${c.field};
  width: ${(p) => (p.$w ? p.$w + "px" : "auto")};
  flex: ${(p) => (p.$w ? "none" : "1")};
  padding-left: 5px;
  gap: 3px;
  select { appearance: none; flex: 1; min-width: 0; height: 100%; padding-right: 20px; text-overflow: ellipsis; }
  i + select, svg + select { padding-left: 2px; }
  span + select { padding-left: 3px; }
  > svg:last-child { position: absolute; right: 5px; top: 8px; pointer-events: none; }
`;
const Swatch = styled.i`
  width: 11px;
  height: 11px;
  background: ${(p) => p.$k};
  flex: none;
`;
const Select = ({ label, value, w, children }) => (
  <SelectWrap $w={w}>
    {children}
    <select aria-label={label} defaultValue={value}><option>{value}</option></select>
    <svg width="9" height="6" aria-hidden="true"><path d="M.5 .5L4.500 4.500L8.500 .5" stroke="#555" strokeWidth="1.200" fill="none" /></svg>
  </SelectWrap>
);
const LoadTag = styled.span`
  background: #cf6a6a;
  color: #fff;
  width: 30px;
  line-height: 13px;
  text-align: center;
`;
const CaseSlot = styled.span`
  width: 27px;
  padding-left: 2px;
  border-right: 1px solid #fff;
`;
const StepButton = styled.button`
  width: 14px;
  height: 21px;
  background: ${(p) => (p.disabled ? "#d2d2d2" : c.field)};
  display: grid;
  place-items: center;
  flex: none;
`;

const Tools = ({ items }) =>
  items.map((t, i) => {
    if (t === "|") return <Sep key={i} />;
    if (t === "^") return <Grip key={i} $first />;
    if (t === ":") return <Grip key={i} />;
    if (t === "»") return <More key={i} aria-label="Další">»</More>;
    if (typeof t !== "string") return <React.Fragment key={i}>{t}</React.Fragment>;
    const on = t.includes("*");
    const caret = t.includes("+");
    const grey = t.includes("~");
    const n = t.replace(/[*+~]/g, "");
    return (
      <Group key={i}>
        <ToolButton $on={on} aria-label={n}><Icon n={n} /></ToolButton>
        {caret && <CaretButton $on={on} aria-label={n + " – nabídka"}><Caret k={grey ? "#777" : "#222"} /></CaretButton>}
      </Group>
    );
  });

const row1 = [
  "^", "newdoc", "open", "cloudC", "cubes", "hand", "save", "print+", "report", "|", "undo+~", "redo+~", "|",
  "nav*", "table*", "colors", "console", "script", "sheet", ":", "selA", "selB", "selC", "selD", "selE", ":", "lcNew", "lcGrey",
  <Select label="Zatěžovací stav" value="1.35 * ZS1" w={269}>
    <Swatch $k="#ccffff" /><Swatch $k="#f5c200" /><LoadTag>ULS</LoadTag><CaseSlot>KZ1</CaseSlot>
  </Select>,
  <StepButton aria-label="Předchozí"><Arrow left /></StepButton>,
  <StepButton aria-label="Následující"><Arrow /></StepButton>,
  "filterX+", "eyeCurve", "xxxCurve", "eyeLoad*", "xxxLoad*", "eyeGrid*+", "eyeRes*", "xxxRes*", "|", "calcSet", "abacus+",
  ":", "zoomX", "cube", "cubeEdit", "|", "»",
];
const row2 = [
  "^", "node+", "line", "member+", "poly+", "|", "sup1", "sup2", "sup3", "|", "dim+", "dim2", "|", "surf+", "surfC+", "opening+", "fold+",
  "solid", "|", "nload", "mload", "mloadG", "sload", "imp+~", "free+", ":", "filter", "|", "frame*", "film", "|", "moment", "rainbow",
  "boxG", "supG", "wing", "|", "w1", "w2", "w3", "w4", "w5", "resNew", "|", "palette+", ":",
  <Select label="Souřadný systém" value="1 - Globální XYZ" w={132}><Swatch $k="#ccffff" /></Select>,
  "csys", "|", "gridHand", "»", ":", "units+", "»",
];

/* ---------- navigator ---------- */
const Work = styled.div`
  flex: 1;
  min-height: 0;
  display: flex;
  gap: 4px;
  padding-left: 2px;
`;
const Dock = styled.aside`
  width: 270px;
  display: flex;
  flex-direction: column;
  flex: none;
`;
const DockHead = styled.div`
  display: flex;
  align-items: center;
  gap: 12px;
  height: ${(p) => p.$h || 21}px;
  padding: 0 7px 0 4px;
  background: ${c.head};
  font-weight: 700;
  color: #333a48;
  flex: none;
  button { display: grid; place-items: center; width: 10px; }
  button:first-of-type { margin-left: auto; }
`;
const DockButtons = () => (
  <>
    <button aria-label="Plovoucí okno"><svg width="9" height="9"><path d="M2.500 2.500V.8H8.500V5.500H6.500M.5 3.500H6.500V8H.5ZM.5 4.500H6.500" fill="none" stroke="#222" /></svg></button>
    <button aria-label="Zavřít panel"><svg width="8" height="8"><path d="M0 0L8 8M8 0L0 8" stroke="#222" strokeWidth="1.800" /></svg></button>
  </>
);
const DockBody = styled.div`
  flex: 1;
  min-height: 0;
  display: flex;
  flex-direction: column;
  border: 2px solid ${c.line};
  border-bottom-width: 1px;
  background: ${c.chrome};
`;
const DockPick = styled.div`
  display: flex;
  gap: 1px;
  padding: 3px 1px 9px;
`;
const Tree = styled.ul`
  list-style: none;
  margin: 0;
  padding: ${(p) => p.$top || 0}px 0 0;
  background: #fff;
  flex: ${(p) => (p.$grow ? p.$grow : 1)} 0 0;
  overflow: hidden;
`;
const TreeRow = styled.li`
  display: grid;
  grid-template-columns: 16px 13px 16px 1fr;
  column-gap: 4px;
  align-items: center;
  height: 18px;
  white-space: nowrap;
  > :nth-child(1) { justify-self: center; }
  label { padding-left: 2px; }
`;
const TreeChevron = ({ show }) => (
  <svg width="6" height="10" aria-hidden="true">{show && <path d="M.8 .8L5 5L.8 9.200" stroke="#a0a0a0" strokeWidth="1.600" fill="none" />}</svg>
);
const Check = styled.input.attrs({ type: "checkbox" })`
  appearance: none;
  width: ${(p) => (p.$mini ? 10 : 13)}px;
  height: ${(p) => (p.$mini ? 10 : 13)}px;
  border: 1px solid ${(p) => (p.$tint ? "#005a9e" : p.$mini ? "#666" : "#333")};
  background: ${(p) => (p.$tint ? c.tool : p.$mini ? "transparent" : "#fff")};
  flex: none;
  display: grid;
  place-items: center;
  &:checked::before {
    content: "";
    width: ${(p) => (p.$mini ? 6 : 9)}px;
    height: ${(p) => (p.$mini ? 3 : 4)}px;
    border: solid #333;
    border-width: 0 0 1px 1px;
    transform: translateY(-1px) rotate(-48deg);
  }
`;
const TreeItem = ({ icon, text, on, tint, arrow, id }) => (
  <TreeRow>
    <TreeChevron show={arrow} />
    <Check id={id} defaultChecked={on} $tint={tint} />
    <Icon n={icon} size={16} />
    <label htmlFor={id}>{text}</label>
  </TreeRow>
);
const Divider = styled.div`
  height: 5px;
  flex: none;
`;
const DockTabs = styled.div`
  display: flex;
  height: 26px;
  border: 1px solid ${c.line};
  border-top: 0;
  flex: none;
`;
const DockTab = styled.button`
  width: 38px;
  height: 24px;
  display: grid;
  place-items: center;
  background: ${(p) => (p.$on ? "#fff" : "#ececf0")};
  border-right: 1px solid ${c.line};
  border-bottom: 1px solid ${(p) => (p.$on ? "#fff" : c.line)};
`;

/* ---------- work area ---------- */
const Main = styled.main`
  flex: 1;
  min-width: 0;
  display: flex;
  flex-direction: column;
`;
const Canvas = styled.section`
  position: relative;
  flex: 590 0 0;
  min-height: 0;
  background: #fdfdfd;
  overflow: hidden;
`;
const Caption = styled.div`
  position: absolute;
  top: 4px;
  left: 5px;
  line-height: 17px;
`;
const CubeAnchor = styled.div`
  position: absolute;
  top: ${(p) => p.$t}px;
  right: ${(p) => p.$r}px;
`;
const Lower = styled.section`
  flex: 328 0 0;
  min-height: 0;
  display: flex;
  flex-direction: column;
`;
const LowerTools = styled.div`
  height: 48px;
  border-bottom: 1px solid ${c.line};
  flex: none;
`;
const LowerHead = styled.div`
  height: 41px;
  border-top: 9px solid #dfdfe3;
  background: #f1f1f1;
  flex: none;
`;
const Grid = styled.div`
  flex: 1;
  border: 1px solid ${c.line};
  border-top: 0;
  background: linear-gradient(${c.chrome}, ${c.chrome}) 0 0 / 60px 100% no-repeat #fff;
`;
const Note = styled.div`
  margin-left: 60px;
  padding-right: 102px;
  height: 18px;
  line-height: 18px;
  text-align: right;
  background: #ffffe1;
  border-bottom: 1px solid #ddd;
`;
const Pager = styled.div`
  display: flex;
  height: 22px;
  flex: none;
  align-items: center;
  > button { width: 17px; display: grid; place-items: center; }
`;
const PageText = styled.span`
  width: 51px;
  text-align: center;
  white-space: nowrap;
`;
const SheetTab = styled.div`
  align-self: stretch;
  margin: -1px 0 0 1px;
  padding: 3px 7px 0;
  background: #fff;
  border: 1px solid ${c.line};
  border-top: 0;
`;
const PageIcon = ({ d }) => <svg width="9" height="8" aria-hidden="true"><path d={d} fill="#909090" /></svg>;

const StatusBar = styled.footer`
  display: flex;
  height: 23px;
  padding: 3px 0 1px 524px;
  gap: 2px;
  flex: none;
`;
const StatusButton = styled.button`
  padding: 0 3px;
  background: #ececec;
  border: 1px solid #b9b9b9;
  border-right-color: #ddd;
  border-bottom-color: #ddd;
`;
const StatusCell = styled.div`
  width: ${(p) => p.$w}px;
  margin-right: -2px;
  border-left: 1px solid #d0d0d0;
  padding-left: 3px;
  white-space: nowrap;
  line-height: 20px;
`;

const dotList = [];
for (let i = -14; i < 16; i++)
  for (let j = -8; j < 30; j++) {
    const x = 179 + i * 92.300 - j * 54;
    const y = 10 + i * 8.200 + j * 20.300;
    if (x > 0 && x < 1122 && y > 0 && y < 590) dotList.push([Math.round(x), Math.round(y)]);
  }

/* ---------- orientation cube ---------- */
const steps = [0, 0.25, 0.74, 1];
const mix = (a, b, t) => [a[0] + (b[0] - a[0]) * t, a[1] + (b[1] - a[1]) * t];
const cells = ([p, q, r, s]) => {
  const out = [];
  for (let i = 0; i < 3; i++)
    for (let j = 0; j < 3; j++) {
      const at = (u, v) => mix(mix(p, q, steps[u]), mix(s, r, steps[u]), steps[v]).join(",");
      out.push([at(i, j), at(i + 1, j), at(i + 1, j + 1), at(i, j + 1)].join(" "));
    }
  return out;
};
const faces = [
  { k: "#a6a6a6", p: [[1, 21], [57, 1], [97, 30], [41, 52]] },
  { k: "#999999", p: [[1, 21], [41, 52], [41, 109], [1, 80]] },
  { k: "#b7b7b7", p: [[41, 52], [97, 30], [97, 89], [41, 109]] },
];
const OrientCube = ({ w }) => (
  <svg width={w} height={Math.round(w * 1.122)} viewBox="0 0 98 110" aria-label="Orientace pohledu">
    {faces.map((f, n) => (
      <g key={n} fill={f.k} stroke="#787474" strokeWidth="2" strokeLinejoin="round">
        {cells(f.p).map((d, i) => <polygon key={i} points={d} />)}
      </g>
    ))}
    <g fontFamily="Open Sans, sans-serif" fontWeight="700" fontSize="13">
      <text x="39" y="31" fill="#3c3c86" fontSize="12" transform="rotate(20 48 27)">+Z</text>
      <text x="15" y="70" fill="#3fa54b" fontSize="11" transform="rotate(30 20 66)">-Y</text>
      <text x="62" y="75" fill="#dc3b36" transform="rotate(-14 69 71)">-X</text>
    </g>
  </svg>
);

/* ---------- dialogs ---------- */
const Dialog = styled.section`
  position: absolute;
  display: flex;
  flex-direction: column;
  background: #fff;
  border: 1px solid ${(p) => (p.$front ? "#666" : "#9a9a9a")};
  box-shadow: ${(p) => (p.$front ? "0 3px 18px rgba(0,0,0,.5)" : "0 3px 12px rgba(0,0,0,.32)")};
  left: ${(p) => (p.$front ? 152 : 134)}px;
  right: ${(p) => (p.$front ? 151 : 134)}px;
  top: ${(p) => (p.$front ? 169 : 144)}px;
  ${(p) => !p.$front && "height: 762px;"}
`;
const DialogBody = styled.div`
  display: flex;
  gap: 10px;
  flex: 1;
  padding: 9px 9px 8px;
  background: ${c.body};
`;
const BackBody = styled(DialogBody)`
  flex-direction: column;
  gap: 12px;
`;
const BackPanel = styled.div`
  flex: 1;
  background: ${c.panel};
`;
const DialogFoot = styled.footer`
  display: flex;
  align-items: center;
  gap: 10px;
  height: 42px;
  padding: 0 10px 0 9px;
  flex: none;
  background:
    repeating-linear-gradient(90deg, transparent 0 2px, #fff 2px 3px) 100% 100% / 9px 9px no-repeat,
    repeating-linear-gradient(transparent 0 2px, #fff 2px 3px) 100% 100% / 9px 9px no-repeat,
    linear-gradient(135deg, #fff 50%, #bbb 50%) 100% 100% / 9px 9px no-repeat;
`;
const Spring = styled.span`
  flex: 1;
`;
const Push = styled.button`
  width: 81px;
  height: 21px;
  background: ${(p) => (p.disabled ? "#cccccc" : "#e1e1e1")};
  color: ${(p) => (p.disabled ? "#838383" : "#000")};
  border: ${(p) => (p.$main ? "2px solid #0078d7" : "1px solid #adadad")};
`;
const Sq = styled.button`
  width: 25px;
  height: 21px;
  display: flex;
  align-items: center;
  justify-content: center;
  background: ${(p) => (p.disabled ? "#e5e5e5" : c.tool)};
  border: ${(p) => (p.$on ? "1px solid #00539c" : "0")};
  flex: none;
`;
const ColorSq = styled.button`
  width: 21px;
  height: 21px;
  background: #f5c200;
  border: 1px solid #111;
`;
const Cluster = styled.div`
  display: flex;
  gap: 3px;
`;
const IconSq = ({ n, ...p }) => <Sq aria-label={n} {...p}><Icon n={n} size={18} /></Sq>;

const Box = styled.section`
  background: #fff;
  padding: 0 5px 4px;
  grid-column: span ${(p) => p.$span || 1};
  min-height: ${(p) => p.$min || 0}px;
  min-width: 0;
  ${(p) => p.$w && `width: ${p.$w}px;`}
  ${(p) => p.$fill && "flex: 1;"}
`;
const BoxTitle = styled.h2`
  display: block;
  margin: 0 0 4px;
  font-size: 11px;
  line-height: 18px;
  font-weight: 700;
  color: ${c.title};
`;
const Spacer = styled.div`
  height: 4px;
`;
const Line = styled.div`
  display: flex;
  gap: 5px;
`;
const TextInput = styled.input`
  flex: 1;
  min-width: 0;
  width: 100%;
  height: 20px;
  padding: 1px 5px 0 3px;
  background: ${(p) => (p.readOnly ? c.off : c.field)};
  text-align: ${(p) => (p.$right ? "right" : "left")};
`;

const ListPanel = styled.section`
  width: 200px;
  display: flex;
  flex-direction: column;
  background: #fff;
  flex: none;
`;
const ListTitle = styled(BoxTitle)`
  margin: 0 0 1px;
  padding-left: 5px;
`;
const List = styled.ul`
  list-style: none;
  margin: 0 1px;
  padding: 0;
  flex: 1;
  background:
    linear-gradient(#e8e8e8, #e8e8e8) 21px 0 / 1px 100% no-repeat,
    linear-gradient(#e8e8e8, #e8e8e8) 33px 0 / 1px 100% no-repeat;
`;
const ListRow = styled.li`
  display: flex;
  align-items: center;
  height: 18px;
  white-space: nowrap;
  background: ${(p) => (p.$on ? "#cce8ff" : "none")};
  > * { flex: none; }
`;
const SwatchCell = styled.span`
  width: 20px;
  height: 18px;
  padding: 2px 3px 0 2px;
  border: ${(p) => (p.$on ? "1px dotted #000" : "1px solid transparent")};
  i { display: block; }
`;
const NumCell = styled.span`
  width: 11px;
  text-align: right;
`;
const Trio = styled.span`
  display: flex;
  margin-left: 6px;
`;
const RowText = styled.span`
  padding-left: 2px;
`;
const ScrollBar = styled.div`
  display: grid;
  grid-template-columns: 17px 1fr 5px 17px;
  align-items: center;
  justify-items: center;
  height: 15px;
  margin: 0 1px;
  background: #f0f0f0;
  > :last-child { grid-column: 4; }
`;
const Thumb = styled.div`
  width: 100%;
  height: 15px;
  background: #cdcdcd;
`;
const ListTools = styled.div`
  display: flex;
  gap: 3px;
  padding: 6px 5px 4px;
`;
const Gap = styled.span`
  width: 4px;
`;

const Right = styled.div`
  flex: 1;
  min-width: 0;
  display: flex;
  flex-direction: column;
`;
const HeadRow = styled.div`
  display: flex;
  gap: 10px;
`;
const Tab = styled.button`
  align-self: flex-start;
  margin-top: 10px;
  height: 22px;
  padding: 3px 9px 0;
  background: ${c.panel};
`;
const TabPanel = styled.div`
  flex: 1;
  display: grid;
  grid-template-columns: 538px minmax(0, 1fr);
  gap: 10px;
  padding: 9px 9px 8px;
  background: ${c.panel};
`;
const Forms = styled.div`
  display: grid;
  grid-template-columns: repeat(2, 1fr);
  gap: 10px;
  align-content: start;
`;
const CommentRow = styled.div`
  grid-column: span 2;
  display: flex;
  gap: 10px;
`;
const SupportGrid = styled.div`
  display: grid;
  grid-template-columns: 90px 30px 90px 1fr 203px;
  align-items: start;
  row-gap: 5px;
  padding-bottom: 15px;
`;
const ColHead = styled.span`
  grid-column: span ${(p) => p.$span || 1};
  margin-bottom: -3px;
`;
const CheckLabel = styled.label`
  display: flex;
  align-items: center;
  gap: 6px;
  height: ${(p) => p.$h || 20}px;
  white-space: nowrap;
`;
const Sub = styled.span`
  font-size: 9px;
  line-height: 9px;
  vertical-align: -1px;
`;
const Dim = styled.span`
  color: ${(p) => (p.$off ? "#8c8c8c" : "#000")};
  padding-left: ${(p) => p.$pad || 0}px;
  line-height: 20px;
  white-space: nowrap;
`;
const Spin = styled.div`
  display: flex;
  align-items: center;
  height: 20px;
  background: ${(p) => (p.$off ? c.off : c.field)};
  input { width: 60px; text-align: right; margin-right: 8px; height: 100%; padding-top: 1px; }
`;
const SpinArrows = ({ off }) => (
  <svg width="19" height="12" aria-hidden="true">
    <path d="M1 3L3.500 0L6 3ZM1 9L3.500 12L6 9ZM13 2.500V9.500L17.500 6Z" fill={off ? "#a0a0a0" : "#333"} />
  </svg>
);
const SupportIcons = styled.div`
  display: flex;
  gap: 10px;
  padding: 2px 0 1px;
`;
const Marked = styled.div`
  position: relative;
  width: 209px;
  &::after {
    content: "";
    position: absolute;
    inset: -4px -8px -3px -8px;
    border: 3px solid #ed1c24;
    border-radius: 1px;
    pointer-events: none;
  }
`;

const Preview = styled.section`
  display: flex;
  flex-direction: column;
  background: #dfdfdf;
  position: relative;
`;
const PreviewTools = styled.div`
  display: flex;
  align-items: center;
  gap: 3px;
  height: 29px;
  padding: 0 5px;
  background: #fff;
`;
const SceneWrap = styled.div`
  flex: 1;
  min-height: 0;
`;

const dofs = [
  { t: "Posun", rows: [["u", "X", 1, 1], ["u", "Y", 1, 1], ["u", "Z", 1, 1]], unit: "[MN/m]" },
  { t: "Natočení", rows: [["φ", "X", 0, 0], ["φ", "Y", 0, 0], ["φ", "Z", 1, 1]], unit: "[kNm/rad]" },
];
const supports = [
  ["2", "#aab03f", [1, 1, 1, 0, 0, 1], "(Uzly : 5) | Vetknut"],
  ["3", "#bc7474", [0, 0, 1, 0, 0, 1], "| Posun"],
  ["4", "#7bbd00", [0, 1, 1, 0, 0, 1], "| Posun v X'"],
  ["5", "#ff0000", [1, 0, 1, 0, 0, 1], "| Posun v Y'"],
];
const menus = ["Soubor", "Úpravy", "Zobrazit", "Vložit", "Přiřadit", "Výpočet", "Výsledky", "Nástroje", "Možnosti", "Okno", "CAD-BIM", "Nápověda"];

const Scene = () => (
  <svg width="100%" height="100%" viewBox="0 0 301 496" aria-label="Náhled podpory">
    <defs>
      <linearGradient id="ball" x1="0" x2="1" y1="0" y2=".15">
        <stop offset="0" stopColor="#33f033" /><stop offset=".3" stopColor="#38d838" /><stop offset=".5" stopColor="#38b838" />
        <stop offset=".7" stopColor="#38c438" /><stop offset="1" stopColor="#33f533" />
      </linearGradient>
      <radialGradient id="shade" gradientUnits="userSpaceOnUse" cx="150" cy="222" r="52">
        <stop offset=".75" stopColor="#0ac40a" stopOpacity="0" /><stop offset="1" stopColor="#067a06" stopOpacity=".9" />
      </radialGradient>
      <radialGradient id="cast" gradientUnits="userSpaceOnUse" cx="160" cy="226" r="75">
        <stop offset=".5" stopColor="#1c7a1c" stopOpacity=".4" /><stop offset="1" stopColor="#1c7a1c" stopOpacity="0" />
      </radialGradient>
      <clipPath id="inBall"><circle cx="150" cy="228" r="46" /></clipPath>
    </defs>
    <circle cx="150" cy="228" r="46" fill="url(#ball)" />
    <path d="M150 228L21 295L128 376Z" fill="#38dc38" />
    <path d="M150 228L175 239L280 319L128 376Z" fill="#38bb38" />
    <path d="M150 228L21 295L175 239Z" fill="#2fe32f" opacity=".35" />
    <path d="M150 228L21 295L128 376L280 319L175 239Z" fill="url(#cast)" />
    <g clipPath="url(#inBall)">
      <path d="M150 228L21 295L128 376Z" fill="#0fcb0f" />
      <path d="M150 228L175 239L280 319L128 376Z" fill="#0cb80c" />
      <path d="M150 228L21 295L128 376L280 319L175 239Z" fill="url(#shade)" />
    </g>
    <g fill="#5dff5d" opacity=".3"><ellipse cx="115" cy="218" rx="2" ry="5" /><ellipse cx="122" cy="221" rx="2" ry="4" /><ellipse cx="178" cy="234" rx="2" ry="4" /><ellipse cx="186" cy="237" rx="2" ry="5" /></g>
    <rect x="148" y="186" width="4" height="4" fill="#ff1010" stroke="#ff8a3c" strokeWidth=".6" />
    <rect x="154" y="170" width="9" height="15" fill="#f3eeee" />
    <text x="155" y="182" fontSize="11" fontWeight="700" fontFamily="Open Sans, sans-serif" fill="#a80000">5</text>
    <g strokeWidth="3" fontSize="10" fontFamily="Open Sans, sans-serif">
      <path d="M59 437L36 445" stroke="#10e010" /><path d="M27 448L35 441L38 447Z" fill="#10c810" />
      <path d="M59 437L76 449" stroke="#f01010" /><path d="M82 454L72 450L76 444Z" fill="#d00c0c" />
      <path d="M59 437V460" stroke="#1a1a9c" /><path d="M55.500 459H62.500L59 470Z" fill="#000066" />
      <circle cx="59" cy="436" r="3.500" fill="#f5e400" stroke="#b8a000" strokeWidth="1" />
      <text x="16" y="455" fill="#10b810">Y</text><text x="85" y="463" fill="#f01010">X</text><text x="56" y="483" fill="#00007a">Z</text>
    </g>
  </svg>
);

const FootIcons = ({ color }) => (
  <>
    <IconSq n="help" /><IconSq n="decimals" />
    {color ? <Cluster><ColorSq aria-label="Barva" /><IconSq n="fonts" /></Cluster> : <IconSq n="fonts" />}
    <IconSq n="monitor" /><IconSq n="fx" />
  </>
);

const SupportDialog = () => (
  <Dialog $front aria-label="Upravit uzlovou podporu">
    <TitleBar $active><Logo />Upravit uzlovou podporu<WindowButtons /></TitleBar>
    <DialogBody>
      <ListPanel>
        <ListTitle>Seznam</ListTitle>
        <List>
          {supports.map(([n, k, m, t], i) => (
            <ListRow key={n} $on={i === 0}>
              <SwatchCell $on={i === 0}><Swatch $k={k} /></SwatchCell>
              <NumCell>{n}</NumCell>
              <Trio>{m.slice(0, 3).map((v, j) => <Check key={j} $mini defaultChecked={!!v} aria-label={`${n} u ${j + 1}`} />)}</Trio>
              <Trio>{m.slice(3).map((v, j) => <Check key={j} $mini defaultChecked={!!v} aria-label={`${n} φ ${j + 1}`} />)}</Trio>
              <RowText>{t}</RowText>
            </ListRow>
          ))}
        </List>
        <ScrollBar>
          <svg width="6" height="9"><path d="M5 .5L1 4.500L5 8.500" stroke="#444" strokeWidth="1.600" fill="none" /></svg>
          <Thumb />
          <svg width="6" height="9"><path d="M1 .5L5 4.500L1 8.500" stroke="#444" strokeWidth="1.600" fill="none" /></svg>
        </ScrollBar>
        <ListTools>
          <IconSq n="winNew" /><IconSq n="winCopy" /><Gap /><IconSq n="checkAll" /><IconSq n="checkSwap" /><Spring /><IconSq n="del" />
        </ListTools>
      </ListPanel>
      <Right>
        <HeadRow>
          <Box $w={60}>
            <BoxTitle as="label" htmlFor="num">Č.</BoxTitle>
            <Line><TextInput id="num" readOnly value="2" $right /></Line>
          </Box>
          <Box $w={477}>
            <BoxTitle as="label" htmlFor="name">Název</BoxTitle>
            <Line><TextInput id="name" defaultValue="Vetknutí" /><IconSq n="edit" $on /></Line>
          </Box>
          <Box $fill>
            <BoxTitle as="label" htmlFor="nodes">Přiřadit uzlům č.</BoxTitle>
            <Line><TextInput id="nodes" readOnly value="5" /><IconSq n="pick" disabled /></Line>
          </Box>
        </HeadRow>
        <Tab>Základní údaje</Tab>
        <TabPanel>
          <Forms>
            <Box>
              <BoxTitle>Souřadný systém</BoxTitle>
              <Line>
                <Select label="Souřadný systém podpory" value="1 - Globální XYZ"><Swatch $k="#ccffff" /></Select>
                <Cluster><IconSq n="winNew" /><IconSq n="winHand" /></Cluster>
              </Line>
            </Box>
            <Box />
            <Box $span={2} $min={270}>
              <BoxTitle>Podporové podmínky</BoxTitle>
              <Spacer />
              {dofs.map((g) => (
                <SupportGrid key={g.t}>
                  <ColHead>{g.t}</ColHead><ColHead $span={3}>Tuhost</ColHead><ColHead>Nelinearita</ColHead>
                  {g.rows.map(([s, a, on, off]) => (
                    <React.Fragment key={a}>
                      <CheckLabel><Check defaultChecked={!!on} /><span>{s}<Sub>{a}</Sub></span></CheckLabel>
                      <Dim $off={off}>C<Sub>{s},{a}</Sub></Dim>
                      <Spin $off={off}>
                        <input aria-label={`Tuhost ${s}${a}`} disabled={!!off} defaultValue={off ? "" : "0.000"} />
                        <SpinArrows off={off} />
                      </Spin>
                      <Dim $off={off} $pad={5}>{g.unit}</Dim>
                      <Select label={`Nelinearita ${s}${a}`} value="Žádná" />
                    </React.Fragment>
                  ))}
                </SupportGrid>
              ))}
              <SupportIcons>
                <IconSq n="g1" /><IconSq n="g2" />
                <Cluster><IconSq n="g3" /><IconSq n="g4" /><IconSq n="g5" /></Cluster>
                <IconSq n="g6" /><IconSq n="g7" />
              </SupportIcons>
            </Box>
            <Box $min={131}>
              <BoxTitle>Možnosti</BoxTitle>
              <Spacer />
              <CheckLabel $h={22}><Check />Specifický směr...</CheckLabel>
              <Marked>
                <CheckLabel $h={22}><Check />Tuhost pomocí fiktivního sloupu...</CheckLabel>
                <CheckLabel $h={22}><Check />Rozměry podpory...</CheckLabel>
              </Marked>
            </Box>
            <Box />
            <CommentRow>
              <Box $fill>
                <BoxTitle>Komentář</BoxTitle>
                <Line><Select label="Komentář" value="" /><IconSq n="stack" disabled /></Line>
              </Box>
              <Box $w={132} />
            </CommentRow>
          </Forms>
          <Preview>
            <SceneWrap><Scene /></SceneWrap>
            <CubeAnchor $t={9} $r={13}><OrientCube w={66} /></CubeAnchor>
            <PreviewTools>
              <IconSq n="view0" disabled />
              <Sq aria-label="Zatížení"><Icon n="load" size={14} /><Caret /></Sq>
              <IconSq n="ruler" $on /><Gap />
              <IconSq n="ax1" /><IconSq n="ax2" /><IconSq n="ax3" /><IconSq n="ax4" />
              <Sq aria-label="Zobrazení"><Icon n="blk" size={14} /><Caret /></Sq>
              <Sq aria-label="Průhlednost"><Icon n="blk2" size={14} /><Caret /></Sq>
              <Spring /><IconSq n="zoomX" />
            </PreviewTools>
          </Preview>
        </TabPanel>
      </Right>
    </DialogBody>
    <DialogFoot>
      <FootIcons color /><Spring />
      <Push $main>OK</Push><Push>Storno</Push><Push disabled>Použít</Push>
    </DialogFoot>
  </Dialog>
);

const NodeDialog = () => (
  <Dialog aria-label="Upravit uzel">
    <TitleBar><Logo />Upravit uzel<WindowButtons stroke="#888" min="#ddd" /></TitleBar>
    <BackBody>
      <Box $min={46}><BoxTitle>U</BoxTitle></Box>
      <BackPanel />
    </BackBody>
    <DialogFoot>
      <FootIcons /><Spring />
      <Push>OK</Push><Push>Storno</Push><Push disabled>Použít</Push>
    </DialogFoot>
  </Dialog>
);

export default function App() {
  return (
    <>
      <Global />
      <Shell>
        <TitleBar>
          <Logo />Dlubal RFEM | 6.01.0019 | protlačení.rf6 | RFEEM6WORK
          <WindowButtons stroke="#888" min="#888" />
        </TitleBar>
        <MenuBar>
          <svg width="16" height="12" aria-hidden="true"><rect width="16" height="12" fill="#2b3a7c" /><path d="M0 7H16M0 5L6 1L14 6M6 1V11" stroke="#fff" fill="none" /></svg>
          {menus.map((m) => <MenuItem key={m}>{m}</MenuItem>)}
          <License>Online License 43 | Robert Martinec | Dlubal Software s.r.o.</License>
          <MdiButton aria-label="Minimalizovat dokument"><svg width="8" height="8"><path d="M1 7H7" stroke="#556070" strokeWidth="2" /></svg></MdiButton>
          <MdiButton aria-label="Obnovit dokument"><svg width="9" height="9"><path d="M2.500 2.500V.8H8.500V5.500H6.500M.5 3.500H6.500V8H.5Z" fill="none" stroke="#556070" /></svg></MdiButton>
          <MdiButton aria-label="Zavřít dokument"><svg width="8" height="8"><path d="M0 0L8 8M8 0L0 8" stroke="#556070" strokeWidth="2" /></svg></MdiButton>
        </MenuBar>
        <ToolRow><Tools items={row1} /></ToolRow>
        <ToolRow><Tools items={row2} /></ToolRow>
        <Work>
          <Dock>
            <DockHead>Navigátor - Výsledky<DockButtons /></DockHead>
            <DockBody>
              <DockPick>
                <Select label="Druh výsledků" value="Posouzení železobetonových konst..."><Icon n="beam" size={14} /></Select>
                <StepButton aria-label="Předchozí výsledek"><Arrow left /></StepButton>
                <StepButton aria-label="Další výsledek" disabled><Arrow k="#777" /></StepButton>
              </DockPick>
              <Tree $top={1} $grow={554}>
                <TreeItem id="t1" icon="check" text="Posudky" on />
                <TreeItem id="t2" icon="check" text="Zobrazit hodnoty" />
              </Tree>
              <Divider />
              <Tree $grow={277}>
                <TreeItem id="r1" icon="resX" text="Výsledky" on arrow />
                <TreeItem id="r2" icon="resE" text="Informace v záhlaví" on />
                <TreeItem id="r3" icon="resE" text="Informace o max/min" on />
                <TreeItem id="r4" icon="nodeE" text="Uzly" on arrow />
                <TreeItem id="r5" icon="resE" text="Pruty" tint arrow />
                <TreeItem id="r6" icon="resE" text="Hodnoty na plochách" tint arrow />
                <TreeItem id="r7" icon="iso" text="Typ zobrazení" tint arrow />
                <TreeItem id="r8" icon="resE" text="Výsledkové řezy" tint arrow />
              </Tree>
            </DockBody>
            <DockTabs>
              <DockTab aria-label="Data"><Icon n="tabData" size={18} /></DockTab>
              <DockTab aria-label="Zobrazit"><Icon n="tabEye" size={14} /></DockTab>
              <DockTab aria-label="Pohledy"><Icon n="camera" size={18} /></DockTab>
              <DockTab aria-label="Výsledky" $on><Icon n="tabRes" size={18} /></DockTab>
            </DockTabs>
          </Dock>
          <Main>
            <Canvas>
              <svg width="100%" height="100%" aria-hidden="true">
                {dotList.map(([x, y]) => <rect key={x + "-" + y} x={x} y={y} width="1" height="1" fill="#444" />)}
                <path d="M571 0L640 50M781 0L640 50" stroke="#ccffff" strokeWidth="1.500" />
                <path d="M560 50L633 21.500L690 60Z" fill="#e6e6d2" stroke="#a5a55a" />
                <path d="M633 22V50" stroke="#b9b96e" />
                <path d="M980 304L1024 338L980 353" stroke="#333" fill="none" strokeWidth=".8" />
                <path d="M980 304L1024 338" stroke="#2fb14d" />
                <path d="M1024 338L1122 305M1024 338L1122 412" stroke="#ececec" fill="none" />
                <path d="M999 336L1008 330L1018 336L1008 345Z" fill="#2fc44a" /><circle cx="1008" cy="331" r="4" fill="#27a83e" />
                <rect x="1022" y="337" width="4" height="4" fill="#e8141c" />
              </svg>
              <Caption>KZ1 - 1.35 * ZS1<br />Zatížení [kN/m²]</Caption>
              <CubeAnchor $t={13} $r={19}><OrientCube w={98} /></CubeAnchor>
            </Canvas>
            <Lower>
              <DockHead $h={20}><DockButtons /></DockHead>
              <LowerTools />
              <LowerHead />
              <Grid><Note>ustný.</Note></Grid>
              <Pager>
                <button aria-label="První"><PageIcon d="M1 0H2.500V8H1ZM8 0V8L3.500 4Z" /></button>
                <button aria-label="Předchozí list"><PageIcon d="M7 0V8L2 4Z" /></button>
                <PageText>1 z 1</PageText>
                <button aria-label="Další list"><PageIcon d="M2 0V8L7 4Z" /></button>
                <button aria-label="Poslední"><PageIcon d="M1 0V8L5.500 4ZM6.500 0H8V8H6.500Z" /></button>
                <SheetTab>Neplatné / deaktivované</SheetTab>
              </Pager>
            </Lower>
          </Main>
        </Work>
        <StatusBar>
          <StatusButton>ÚCHOP</StatusButton><StatusButton>RASTR</StatusButton><StatusButton>LRASTR</StatusButton><StatusButton>OUCHOP</StatusButton>
          <StatusCell $w={104} /><StatusCell $w={107} /><StatusCell $w={155}>SS: Globální XYZ</StatusCell><StatusCell $w={66}>Rovina: XY</StatusCell>
          <StatusCell $w={76} /><StatusCell $w={76} /><StatusCell $w={76} /><StatusCell $w={18} />
        </StatusBar>
      </Shell>
      <NodeDialog />
      <SupportDialog />
    </>
  );
}
